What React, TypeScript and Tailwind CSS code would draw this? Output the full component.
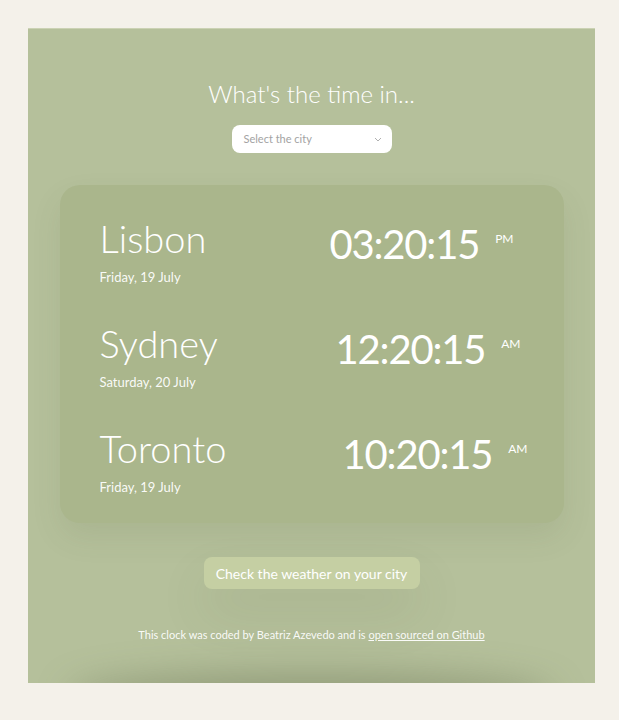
import React from "react";

const rows = [
  { city: "Lisbon", date: "Friday, 19 July", time: "03:20:15", ampm: "PM", pr: "pr-[50px]" },
  { city: "Sydney", date: "Saturday, 20 July", time: "12:20:15", ampm: "AM", pr: "pr-[43px]" },
  { city: "Toronto", date: "Friday, 19 July", time: "10:20:15", ampm: "AM", pr: "pr-[36px]" },
];

export default function App() {
  return (
    <div className="min-h-screen w-full bg-[#f4f1ea] pt-[28px] pl-[28px]" style={{ fontFamily: "Lato, 'Noto Sans', sans-serif" }}>
      <div className="relative w-[567px] h-[655px] overflow-hidden bg-[#b5c09b] border-t border-[#cbd2b4] flex flex-col items-center">
        <h1 className="mt-[50px] text-[24px] leading-[30px] font-light text-white">What's the time in...</h1>
        <div className="mt-[16px] w-[160px] h-[28px] bg-white rounded-[8px] flex items-center justify-between pl-[12px] pr-[10px]">
          <span className="text-[11px] text-[#a3a3a3]">Select the city</span>
          <svg width="8" height="5" viewBox="0 0 8 5" fill="none">
            <path d="M1 1l3 3 3-3" stroke="#b0b0b0" strokeWidth="1" />
          </svg>
        </div>
        <div className="mt-[32px] w-[504px] h-[338px] rounded-[20px] bg-[#aab68c] shadow-[0_14px_30px_rgba(80,90,60,0.10)] flex flex-col pl-[40px] pt-[29px] gap-[34px]">
          {rows.map((r) => (
            <div key={r.city} className={`flex items-start justify-between ${r.pr}`}>
              <div className="flex flex-col">
                <div className="text-[38px] leading-[48px] font-light text-white">{r.city}</div>
                <div className="mt-[7px] text-[13px] leading-[16px] text-white/95">{r.date}</div>
              </div>
              <div className="flex items-start pt-[6px]">
                <span className="text-[40px] leading-[48px] tracking-[-1.2px] text-white">{r.time}</span>
                <span className="ml-[16px] mt-[12px] text-[12px] leading-[14px] text-white">{r.ampm}</span>
              </div>
            </div>
          ))}
        </div>
        <button className="mt-[34px] w-[216px] h-[32px] rounded-[8px] bg-[#c5cfa3] text-white text-[14px] shadow-[0_24px_50px_rgba(80,90,60,0.12)]">
          Check the weather on your city
        </button>
        <p className="mt-[38px] text-[11px] text-white/95">
          This clock was coded by Beatriz Azevedo and is <a className="underline">open sourced on Github</a>
        </p>
        <div className="absolute left-[40px] right-[40px] bottom-[-40px] h-[50px] rounded-[50%] bg-[rgba(80,90,60,0.35)] blur-[18px]" />
      </div>
    </div>
  );
}
